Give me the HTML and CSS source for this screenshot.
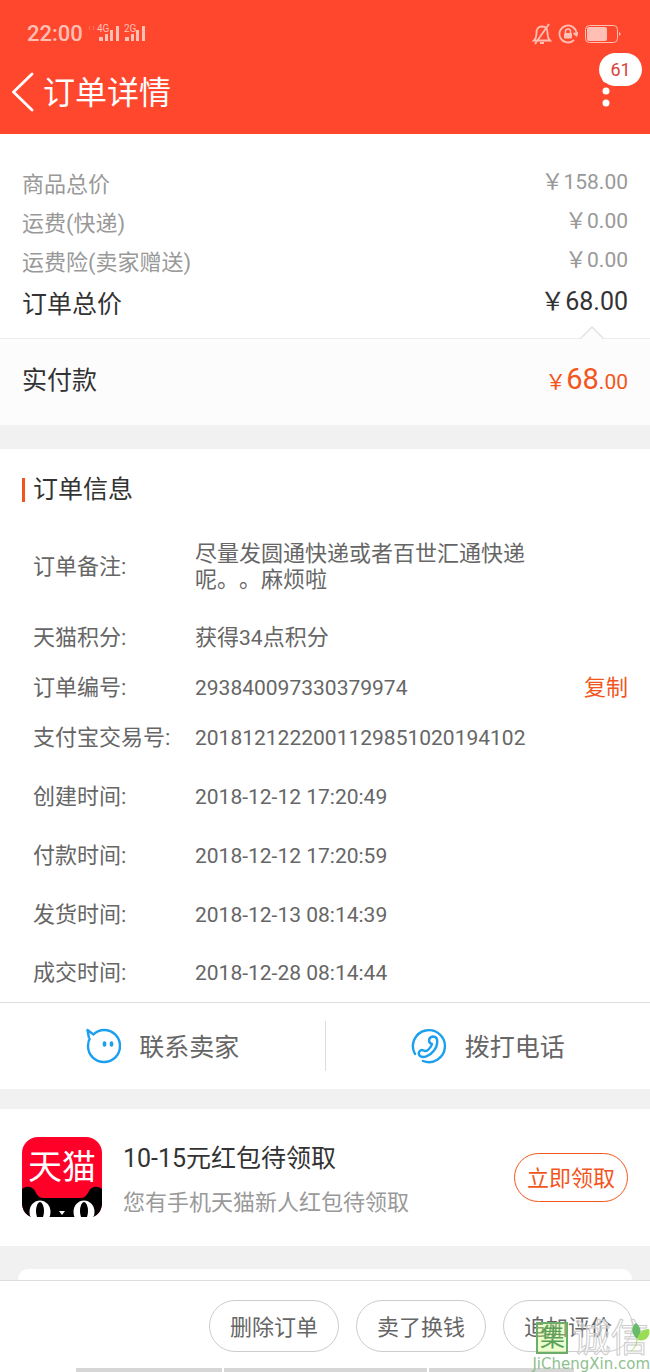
FILE: index.html
```html
<!DOCTYPE html>
<html lang="zh-CN">
<head>
<meta charset="UTF-8" />
<meta name="viewport" content="width=device-width, initial-scale=1" />
<title>订单详情</title>
<link rel="stylesheet" href="styles.css">
</head>
<body>
    <header class="header">
        <div class="status">
            <span class="status__time">22:00</span>
            <svg class="status__signal" width="60" height="24" viewBox="0 0 60 24" aria-hidden="true">
                <path d="M2 4l-1 2 1 2M5 4l1 2-1 2" fill="none" stroke="currentColor" stroke-width="1" opacity=".4" />
                <text x="9" y="10" class="status__net">4G</text>
                <text x="36" y="10" class="status__net">2G</text>
                <path d="M11 15h4v4h-4zM17 12h3v7h-3zM22 8h3v11h-3zM28 4h3v15h-3z" fill="currentColor" />
                <path d="M37 15h4v4h-4zM43 12h3v7h-3zM48 8h3v11h-3zM54 4h3v15h-3z" fill="currentColor" />
            </svg>
            <div class="status__icons">
                <svg width="20" height="22" viewBox="0 0 20 22" fill="none" stroke="currentColor" stroke-width="1.800" aria-hidden="true">
                    <path d="M2 17.500c2-2 2.500-4 2.500-8 0-3.500 2-6 5.500-6s5.500 2.500 5.500 6c0 4 .5 6 2.500 8zM8 20h4M3 21L17 1" />
                </svg>
                <svg width="20" height="20" viewBox="0 0 20 20" fill="none" stroke="currentColor" stroke-width="1.800" aria-hidden="true">
                    <path d="M16 16A8.500 8.500 0 1 1 18.500 10M15.500 9l3 2.500L20 8.500" />
                    <path d="M7.500 9V7.500a2.500 2.500 0 0 1 5 0V9" stroke-width="1.500" />
                    <rect x="6" y="9" width="8" height="5.500" rx="1" fill="currentColor" stroke="none" />
                </svg>
                <svg width="38" height="20" viewBox="0 0 38 20" aria-hidden="true">
                    <rect x="1.500" y="1.500" width="32" height="17" rx="4" fill="none" stroke="currentColor" />
                    <rect x="3" y="3" width="20" height="14" rx="2" fill="currentColor" />
                    <path d="M35 8v4l2-2z" fill="currentColor" />
                </svg>
            </div>
        </div>
        <div class="navbar">
            <button class="navbar__back" aria-label="返回">
                <svg width="24" height="42" viewBox="0 0 24 42" aria-hidden="true">
                    <path d="M20 3L1.500 21l18.500 18" fill="none" stroke="currentColor" stroke-width="2.800" stroke-linecap="round" stroke-linejoin="round" />
                </svg>
            </button>
            <h1 class="navbar__title">订单详情</h1>
            <button class="navbar__more" aria-label="更多">
                <svg width="8" height="40" viewBox="0 0 8 40" fill="currentColor" aria-hidden="true">
                    <circle cx="4" cy="7" r="3.500" />
                    <circle cx="4" cy="19" r="3.500" />
                    <circle cx="4" cy="31" r="3.500" />
                </svg>
                <span class="badge">61</span>
            </button>
        </div>
    </header>

    <main>
        <dl class="prices">
            <div class="prices__row"><dt>商品总价</dt><dd>￥<span class="num">158.00</span></dd></div>
            <div class="prices__row"><dt>运费(快递)</dt><dd>￥<span class="num">0.00</span></dd></div>
            <div class="prices__row"><dt>运费险(卖家赠送)</dt><dd>￥<span class="num">0.00</span></dd></div>
            <div class="prices__row prices__row--total"><dt>订单总价</dt><dd>￥68.00</dd></div>
        </dl>
        <dl class="paid">
            <dt>实付款</dt>
            <dd>￥<strong class="paid__big">68</strong>.00</dd>
            <svg class="paid__notch" width="26" height="13" viewBox="0 0 26 13" aria-hidden="true">
                <path d="M1 13L13 1l12 12" fill="#fcfcfc" stroke="#e2e2e2" stroke-width="1.500" />
            </svg>
        </dl>

        <section class="info">
            <h2 class="info__title">订单信息</h2>
            <dl class="info__list">
                <div class="info__row info__row--note"><dt>订单备注:</dt><dd>尽量发圆通快递或者百世汇通快递呢。。麻烦啦</dd></div>
                <div class="info__row"><dt>天猫积分:</dt><dd>获得<span class="num">34</span>点积分</dd></div>
                <div class="info__row"><dt>订单编号:</dt><dd class="num">293840097330379974</dd><dd class="info__action"><button class="copy">复制</button></dd></div>
                <div class="info__row"><dt>支付宝交易号:</dt><dd class="num">2018121222001129851020194102</dd></div>
            </dl>
            <dl class="info__list info__list--times">
                <div class="info__row"><dt>创建时间:</dt><dd class="num">2018-12-12 17:20:49</dd></div>
                <div class="info__row"><dt>付款时间:</dt><dd class="num">2018-12-12 17:20:59</dd></div>
                <div class="info__row"><dt>发货时间:</dt><dd class="num">2018-12-13 08:14:39</dd></div>
                <div class="info__row"><dt>成交时间:</dt><dd class="num">2018-12-28 08:14:44</dd></div>
            </dl>
        </section>

        <div class="contact">
            <button class="contact__btn">
                <svg width="36" height="36" viewBox="0 0 36 36" fill="none" stroke="currentColor" stroke-width="2.400" stroke-linejoin="round" aria-hidden="true">
                    <path d="M4 10L2.500 2l6 4.500C11.500 3.500 15 2 19 2c9 0 16 7 16 16s-7 16-16 16S3 27 3 18c0-3 .5-5.500 2-8" />
                    <path d="M19.500 15v2M26.500 15v2" stroke-width="3.600" stroke-linecap="round" />
                </svg>
                <span class="contact__label">联系卖家</span>
            </button>
            <button class="contact__btn">
                <svg width="36" height="36" viewBox="0 0 36 36" fill="none" stroke="currentColor" stroke-width="2.400" stroke-linecap="round" stroke-linejoin="round" aria-hidden="true">
                    <path d="M4 26A16 16 0 1 1 12 33" />
                    <path d="M21 16c-4-1-4-7 1-7.500 6 0 5 9 1 14-4 5.500-11.500 8.500-14.500 5-2-3 1-6.500 4-5 2 1 3.500.5 5-1 1.500-1.500 3-3.500 3.500-5.500z" />
                </svg>
                <span class="contact__label">拨打电话</span>
            </button>
        </div>

        <section class="promo">
            <svg class="promo__logo" width="80" height="80" viewBox="0 0 80 80" role="img" aria-label="天猫">
                <clipPath id="tile"><path d="M16 0h48a16 16 0 0 1 16 16v50c0 7-4 12-9 14H9c-5-2-9-7-9-14V16A16 16 0 0 1 16 0z" /></clipPath>
                <g clip-path="url(#tile)">
                    <rect width="80" height="80" fill="#ff0029" />
                    <path d="M0 52c5-4 11-2 13 2 2 4 4 7 8 7h38c4 0 6-3 8-7 2-4 8-6 13-2v28H0z" fill="#000" />
                    <ellipse cx="18" cy="75" rx="10.500" ry="11.500" fill="#fff" />
                    <ellipse cx="62" cy="75" rx="10.500" ry="11.500" fill="#fff" />
                    <ellipse cx="18" cy="74" rx="4" ry="9" fill="#000" />
                    <ellipse cx="62" cy="74" rx="4" ry="9" fill="#000" />
                    <path d="M37 74h6l-3 4z" fill="#fff" />
                </g>
                <text x="40" y="42" text-anchor="middle" class="promo__brand">天猫</text>
            </svg>
            <div class="promo__text">
                <h2 class="promo__title">10-15元红包待领取</h2>
                <p class="promo__desc">您有手机天猫新人红包待领取</p>
            </div>
            <button class="pill pill--accent">立即领取</button>
        </section>

        <div class="next-card"></div>
    </main>

    <footer class="footer">
        <div class="footer__actions">
            <button class="pill">删除订单</button>
            <button class="pill">卖了换钱</button>
            <button class="pill">追加评价</button>
        </div>
        <div class="footer__strip"><i></i><i></i><i></i></div>
        <div class="stamp">
            <div class="stamp__name">
                <span class="stamp__box">集</span>
                <span class="stamp__outline">诚信</span>
                <svg class="stamp__leaf" width="20" height="30" viewBox="0 0 20 30" aria-hidden="true">
                    <path d="M6 15C1 10 1 4 6 0c5 4 6 9 2 15z" fill="#69bb69" />
                    <path d="M8 17c0-7 4-11 11-11 2 7-3 13-11 11z" fill="#9bdc55" />
                    <path d="M7 15c0 6-2 10-6 13" fill="none" stroke="#9bdc55" />
                </svg>
            </div>
            <span class="stamp__url">JiChengXin.com</span>
        </div>
    </footer>
</body>
</html>
```
FILE: styles.css
```css
* {
    box-sizing: border-box;
}
body {
    margin: 0;
    background-color: #f1f1f1;
    color: #666;
    font-family: Roboto, "Noto Sans CJK SC", sans-serif;
    font-size: 22px;
    line-height: 26px;
    text-spacing-trim: space-all;
}
h1, h2, p, dl, dd {
    margin: 0;
    font-weight: 400;
}
button {
    padding: 0;
    border: none;
    background: none;
    color: inherit;
    font: inherit;
    cursor: pointer;
}
svg {
    display: block;
    flex-shrink: 0;
}
.num {
    font-size: 21px;
}

/* header */
.header {
    padding: 20px 8px 20px 12px;
    background-color: #ff472e;
    color: #fff;
}
.status {
    display: flex;
    align-items: center;
    padding: 0 20px 0 15px;
    color: #ffbfb5;
}
.status__time {
    font-weight: 500;
    line-height: 28px;
}
.status__signal {
    margin-left: 5px;
}
.status__net {
    fill: currentColor;
    font-size: 10px;
}
.status__icons {
    display: flex;
    align-items: center;
    gap: 6px;
    margin-left: auto;
}
.navbar {
    display: flex;
    align-items: center;
    padding-top: 22px;
}
.navbar__title {
    flex: 1;
    margin-left: 7px;
    padding-top: 2px;
    font-size: 32px;
    line-height: 42px;
}
.navbar__more {
    position: relative;
    padding: 0 32px;
}
.badge {
    position: absolute;
    right: 0;
    bottom: 26px;
    width: 43px;
    border-radius: 17px;
    background-color: #fff;
    color: #d8423a;
    font-size: 18px;
    line-height: 33px;
}

/* prices */
.prices {
    padding: 30px 22px 16px;
    background-color: #fff;
    color: #999;
}
.prices__row,
.paid {
    display: flex;
    justify-content: space-between;
}
.prices__row {
    height: 39px;
    line-height: 42px;
}
.prices__row dd {
    line-height: 36px;
}
.prices__row--total {
    height: 41px;
    padding-top: 3px;
    font-size: 25px;
}
.prices__row--total,
.paid dt {
    color: #333;
}
.paid {
    position: relative;
    align-items: center;
    height: 87px;
    padding: 0 22px 3px;
    border-top: 1px solid #eee;
    background-color: #fcfcfc;
    font-size: 25px;
}
.paid dd {
    color: #f2561d;
    font-size: 21px;
}
.paid__big {
    font-size: 29px;
    font-weight: 400;
}
.paid__notch {
    position: absolute;
    right: 45px;
    top: -13px;
}

/* order info */
.info {
    margin-top: 24px;
    padding: 25px 22px 0;
    background-color: #fff;
}
.info__title {
    display: flex;
    align-items: center;
    gap: 8px;
    margin-bottom: 15px;
    color: #333;
    font-size: 25px;
    line-height: 32px;
}
.info__title::before {
    content: "";
    width: 3px;
    height: 24px;
    background-color: #f2561d;
}
.info__list {
    padding-left: 11px;
}
.info__list--times {
    margin-top: 4px;
}
.info__row {
    display: grid;
    grid-template-columns: 162px 1fr auto;
    align-items: center;
    min-height: 50px;
}
.info__row--note {
    min-height: 92px;
    padding-right: 90px;
}
.info__list--times .info__row {
    min-height: 59px;
}
.info__list--times .info__row:last-child {
    min-height: 58px;
}
.copy {
    color: #f2561d;
}

/* contact */
.contact {
    display: flex;
    padding: 18px 0;
    border-top: 1px solid #ddd;
    background-color: #fff;
}
.contact__btn {
    display: flex;
    flex: 1;
    align-items: center;
    justify-content: center;
    gap: 18px;
    height: 50px;
    font-size: 25px;
}
.contact__btn + .contact__btn {
    border-left: 1px solid #ddd;
}
.contact__btn svg {
    color: #1c9fee;
}
.contact__label {
    padding-top: 4px;
}

/* promo */
.promo {
    display: flex;
    align-items: center;
    margin-top: 20px;
    padding: 28px 22px 29px;
    background-color: #fff;
}
.promo__brand {
    fill: #fff;
    font-size: 34px;
}
.promo__text {
    flex: 1;
    margin-left: 21px;
    padding-top: 4px;
}
.promo__title {
    margin-bottom: 14px;
    color: #333;
    font-size: 25px;
    line-height: 34px;
}
.promo__desc {
    color: #999;
}
.pill {
    width: 130px;
    height: 52px;
    padding-top: 3px;
    border: 1px solid #ccc;
    border-radius: 26px;
}
.pill--accent {
    width: 114px;
    height: 49px;
    border-color: #f2561d;
    color: #f2561d;
}
.next-card {
    height: 11px;
    margin: 23px 18px 0;
    border-radius: 10px 10px 0 0;
    background-color: #fff;
}

/* footer */
.footer {
    position: relative;
    border-top: 1px solid #ddd;
    background-color: #fff;
}
.footer__actions {
    display: flex;
    justify-content: flex-end;
    gap: 17px;
    padding: 19px 17px 16px;
}
.footer__strip {
    display: grid;
    grid-template-columns: 146px 203px 145px;
    gap: 2px;
    padding-left: 76px;
}
.footer__strip i {
    height: 4px;
    background-color: #d6d6d6;
}
.stamp {
    position: absolute;
    right: 0;
    bottom: 0;
    pointer-events: none;
}
.stamp__name {
    display: flex;
    align-items: center;
    gap: 4px;
    padding-left: 4px;
}
.stamp__box {
    width: 32px;
    border: 2px solid #6cae69;
    background-color: rgba(204, 255, 130, 0.4);
    color: #5aa05a;
    font-size: 25px;
    line-height: 28px;
    text-align: center;
}
.stamp__outline {
    color: rgba(255, 255, 255, 0.4);
    font-size: 38px;
    line-height: 38px;
    -webkit-text-stroke: 1px #ccc;
}
.stamp__leaf {
    position: absolute;
    right: 0;
    top: 4px;
}
.stamp__url {
    display: block;
    color: #8fbf8f;
    font-family: "DejaVu Sans", sans-serif;
    font-size: 15px;
    line-height: 15px;
}
```
